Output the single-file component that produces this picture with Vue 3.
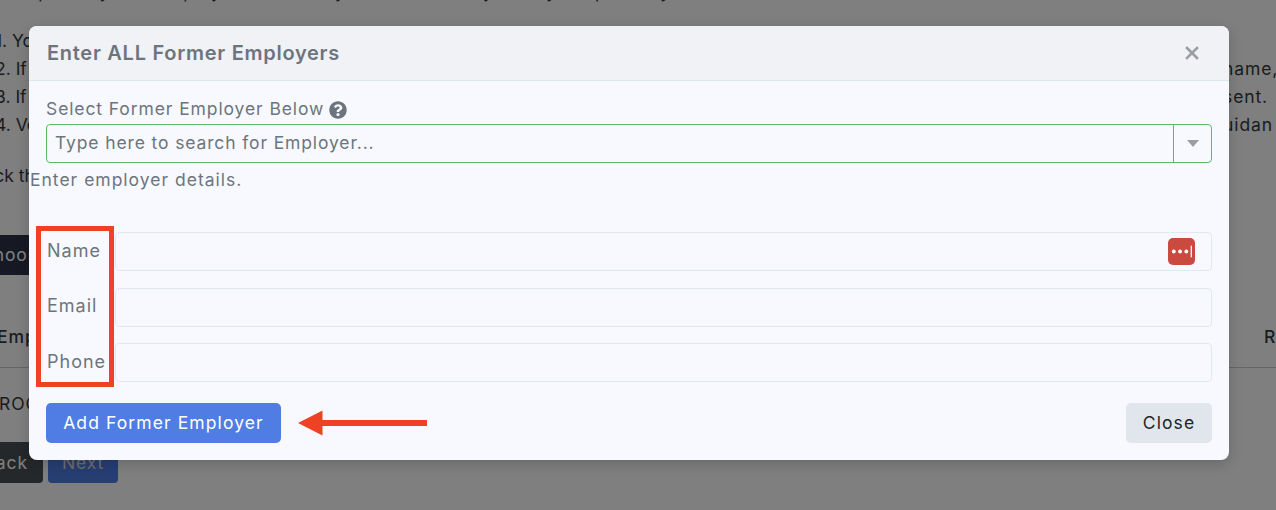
<script setup>
const fields = ['Name', 'Email', 'Phone']
</script>

<template>
  <div class="page">
    <div class="bg">
      <p class="top">Complete your employment history as accurately as you possibly can</p>
      <div class="list">
        <div class="li"><span class="head">1. You</span></div>
        <div class="li"><span class="head">2. If y</span><span class="tail">name,</span></div>
        <div class="li"><span class="head">3. If y</span><span class="tail">sent.</span></div>
        <div class="li"><span class="head">4. Ve</span><span class="tail">uidan</span></div>
      </div>
      <p class="click">Click the</p>
      <div class="dark-btn">Choose</div>
      <div class="thead"><span>Employer</span><span class="re">Re</span></div>
      <div class="trow">PROC</div>
      <div class="nav">
        <div class="back">Back</div>
        <div class="next">Next</div>
      </div>
    </div>

    <div class="scrim"></div>

    <div class="modal">
      <header class="m-head">
        <h5>Enter ALL Former Employers</h5>
        <svg class="x" viewBox="0 0 14 14" width="14" height="14" aria-hidden="true">
          <path d="M2 2l10 10M12 2L2 12" stroke="#9a9da3" stroke-width="2.6" stroke-linecap="square" fill="none" />
        </svg>
      </header>

      <div class="m-body">
        <div class="sel-label">
          <span>Select Former Employer Below</span>
          <svg viewBox="0 0 512 512" width="18" height="18" aria-hidden="true">
            <path fill="#6c757d" d="M504 256c0 137-111 248-248 248S8 393 8 256 119 8 256 8s248 111 248 248zM262.700 90c-54.500 0-89.300 23-116.500 63.800-3.500 5.300-2.400 12.400 2.700 16.300l34.700 26.300c5.200 3.900 12.600 3 16.700-2.100 17.900-22.700 30.100-35.800 57.300-35.800 20.400 0 45.700 13.100 45.700 32.900 0 15-12.400 22.700-32.500 34-23.500 13.200-54.600 29.600-54.600 70.700V300c0 6.600 5.400 12 12 12h56c6.600 0 12-5.400 12-12v-1.300c0-28.500 83.200-29.700 83.200-106.700 0-58-60.200-102-116.500-102zM256 338c-25.400 0-46 20.600-46 46 0 25.400 20.600 46 46 46s46-20.600 46-46c0-25.400-20.600-46-46-46z" />
          </svg>
        </div>

        <div class="combo">
          <span class="ph">Type here to search for Employer...</span>
          <span class="caret-box"><i class="caret"></i></span>
        </div>

        <p class="hint">Enter employer details.</p>

        <div class="fields">
          <div v-for="f in fields" :key="f" class="row">
            <label>{{ f }}</label>
            <div class="input">
              <span v-if="f === 'Name'" class="pm">
                <svg viewBox="0 0 28 28" width="27" height="27" aria-hidden="true">
                  <circle cx="6" cy="14" r="2" fill="#fff" />
                  <circle cx="12.500" cy="14" r="2" fill="#fff" />
                  <circle cx="19" cy="14" r="2" fill="#fff" />
                  <rect x="23.500" y="8" width="1.300" height="12" fill="#fff" />
                </svg>
              </span>
            </div>
          </div>
          <div class="redbox"></div>
        </div>

        <footer class="m-foot">
          <button class="add" type="button">Add Former Employer</button>
          <svg class="arrow" viewBox="0 0 129 26" width="129" height="26" aria-hidden="true">
            <path d="M0 13L24.500 0.500v9.500H129v6H24.500v9.500z" fill="#ee4125" />
          </svg>
          <button class="close" type="button">Close</button>
        </footer>
      </div>
    </div>
  </div>
</template>

<style scoped>
.page {
  position: relative;
  width: 1276px;
  height: 510px;
  overflow: hidden;
  background: #fff;
  font-family: Inter, "Open Sans", sans-serif;
  color: #343a40;
  font-size: 17.500px;
  letter-spacing: 0.9px;
}
.bg {
  margin-left: -3px;
}
.top {
  margin: -20px 0 0;
  height: 44px;
  line-height: 24px;
  word-spacing: 10px;
}
.list {
  margin-top: 3px;
}
.li {
  display: flex;
  justify-content: space-between;
  height: 28px;
  line-height: 28px;
}
.head {
  letter-spacing: 0;
  margin-left: -2px;
}
.tail {
  width: 53px;
  white-space: nowrap;
}
.click {
  margin: 24px 0 0 -24px;
  height: 72px;
  line-height: 26px;
  letter-spacing: 0;
}
.dark-btn {
  margin-left: -17px;
  width: 120px;
  height: 40px;
  line-height: 40px;
  background: #2c3049;
  color: #fff;
  border-radius: 4px;
}
.thead {
  display: flex;
  justify-content: space-between;
  font-weight: 500;
  height: 93px;
  line-height: 24px;
  padding-top: 50px;
  box-sizing: border-box;
  border-bottom: 1px solid #ccc;
}
.re {
  width: 12px;
  white-space: nowrap;
}
.trow {
  height: 74px;
  line-height: 72px;
  margin-left: -10px;
}
.nav {
  display: flex;
  gap: 5px;
  margin-left: -40px;
}
.back,
.next {
  height: 41px;
  line-height: 41px;
  border-radius: 4px;
  text-align: center;
}
.back {
  width: 86px;
  background: #4a5156;
  color: #fff;
  text-align: right;
  padding-right: 15px;
  box-sizing: border-box;
}
.next {
  width: 70px;
  background: #4f7de4;
  color: #ddd;
}
.scrim {
  position: absolute;
  inset: 0;
  background: rgba(0, 0, 0, 0.5);
}
.modal {
  position: absolute;
  left: 29px;
  top: 26px;
  width: 1200px;
  height: 434px;
  box-sizing: border-box;
  background: #f8f9fe;
  border-radius: 8px;
  box-shadow: 0 4px 14px rgba(0, 0, 0, 0.18);
  color: #6c757d;
  overflow: hidden;
  letter-spacing: 0;
}
.m-head {
  display: flex;
  align-items: center;
  justify-content: space-between;
  height: 55px;
  box-sizing: border-box;
  padding: 0 30px 0 18px;
  background: #f0f2f6;
  border-bottom: 1px solid #dee6ed;
}
.m-head h5 {
  margin: 0;
  font-size: 20px;
  font-weight: 600;
  color: #6c757d;
  letter-spacing: 0.72px;
}
.m-body {
  padding: 16px 17px 0 17px;
}
.sel-label {
  display: flex;
  align-items: center;
  gap: 5px;
  height: 24px;
  line-height: 24px;
  font-size: 17.500px;
  letter-spacing: 0.9px;
}
.sel-label svg {
  margin-top: 2px;
}
.combo {
  display: flex;
  align-items: center;
  justify-content: space-between;
  height: 39px;
  box-sizing: border-box;
  margin-top: 3px;
  border: 1px solid #5cb96c;
  border-radius: 4px;
}
.ph {
  padding: 0 0 2px 8px;
  font-size: 17.500px;
  letter-spacing: 0.87px;
}
.caret-box {
  display: flex;
  align-items: center;
  justify-content: center;
  width: 37px;
  height: 100%;
  border-left: 1px solid #5cb96c;
}
.caret {
  width: 0;
  height: 0;
  border-left: 6.500px solid transparent;
  border-right: 6.500px solid transparent;
  border-top: 7px solid #9a9da3;
}
.hint {
  margin: 5px 0 0 -16px;
  height: 24px;
  line-height: 24px;
  font-size: 17.500px;
  letter-spacing: 1px;
}
.fields {
  position: relative;
  margin-top: 40px;
  display: flex;
  flex-direction: column;
  gap: 16.500px;
}
.row {
  display: flex;
  align-items: center;
  height: 39px;
}
.row label {
  width: 68px;
  margin-left: 1px;
  flex: none;
  margin-top: -3px;
  font-size: 18px;
  letter-spacing: 1px;
}
.input {
  flex: 1;
  display: flex;
  align-items: center;
  justify-content: flex-end;
  height: 39px;
  box-sizing: border-box;
  border: 1px solid #e2e8f0;
  border-radius: 4px;
  padding-right: 16px;
}
.pm {
  display: flex;
  width: 27px;
  height: 27px;
  background: #cb4a40;
  border-radius: 5px;
}
.redbox {
  position: absolute;
  left: -10px;
  top: -6px;
  width: 78px;
  height: 160.500px;
  box-sizing: border-box;
  border: 5px solid #ee4125;
}
.m-foot {
  display: flex;
  align-items: center;
  margin-top: 21px;
}
.add,
.close {
  height: 40px;
  border: 0;
  border-radius: 5px;
  font: inherit;
  font-size: 17.500px;
  padding: 0 0 2px;
  letter-spacing: 1.100px;
}
.add {
  width: 235px;
  background: #507de3;
  color: #fff;
}
.arrow {
  margin-left: 16.500px;
}
.close {
  width: 86px;
  margin-left: auto;
  background: #e0e6ec;
  color: #212529;
}
.x {
  display: block;
}
</style>
